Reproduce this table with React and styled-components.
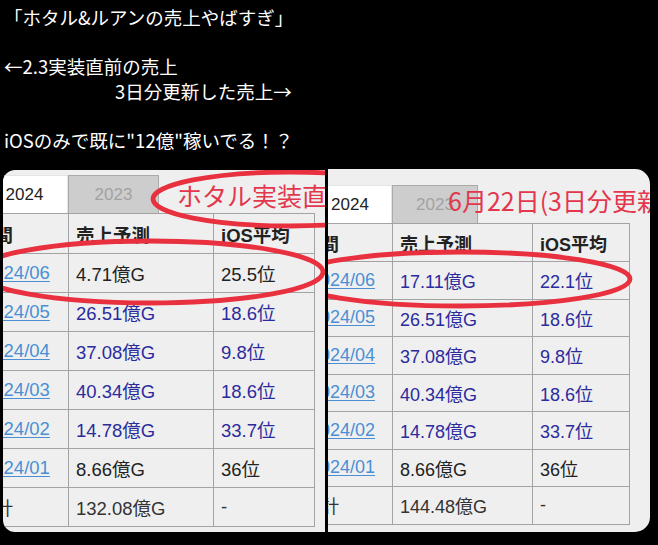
import styled, { createGlobalStyle } from "styled-components";

const GlobalStyles = createGlobalStyle`
  * { box-sizing: border-box; }
  body {
    margin: 0;
    background: #000;
  }
`;

const leftRows = [
  { date: "2024/06", sales: "4.71億G", rank: "25.5位", blue: false },
  { date: "2024/05", sales: "26.51億G", rank: "18.6位", blue: true },
  { date: "2024/04", sales: "37.08億G", rank: "9.8位", blue: true },
  { date: "2024/03", sales: "40.34億G", rank: "18.6位", blue: true },
  { date: "2024/02", sales: "14.78億G", rank: "33.7位", blue: true },
  { date: "2024/01", sales: "8.66億G", rank: "36位", blue: false },
];

const rightRows = [
  { date: "2024/06", sales: "17.11億G", rank: "22.1位", blue: true },
  ...leftRows.slice(1),
];

const shots = [
  {
    rows: leftRows,
    total: "132.08億G",
    cols: [93, 145, 101],
    head: 40,
    row: 39,
    font: 18.5,
    shift: -28,
    note: { text: "ホタル実装直前", x: 174, y: 13 },
    rings: [
      { cx: 287, cy: 29, rx: 137, ry: 27 },
      { cx: 147, cy: 102, rx: 173, ry: 31 },
    ],
  },
  {
    rows: rightRows,
    total: "144.48億G",
    cols: [90, 140, 97],
    head: 38,
    row: 37.5,
    font: 18,
    shift: -26,
    note: { text: "6月22日(3日分更新)", x: 120, y: 19 },
    rings: [{ cx: 132, cy: 110, rx: 170, ry: 27 }],
  },
];

export default function App() {
  return (
    <>
      <GlobalStyles />
      <Page>
        <Caption>
          <Line>「ホタル&ルアンの売上やばすぎ」</Line>
          <Line />
          <Line>←2.3実装直前の売上</Line>
          <Line $indent={111}>3日分更新した売上→</Line>
          <Line />
          <Line>iOSのみで既に"12億"稼いでる！？</Line>
        </Caption>
        <Shots>
          {shots.map((s, i) => (
            <Shot key={i} $side={i === 0 ? "left" : "right"}>
              <Sheet $shift={s.shift} $font={s.font}>
                <Tabs>
                  <Tab $w={s.cols[0]} $active>2024</Tab>
                  <Tab $w={s.cols[1] - 54}>2023</Tab>
                </Tabs>
                <Table $w={s.cols[0] + s.cols[1] + s.cols[2]}>
                  <colgroup>
                    {s.cols.map((w, k) => <col key={k} style={{ width: w }} />)}
                  </colgroup>
                  <tbody>
                    <tr style={{ height: s.head }}>
                      <Head $tight>期間</Head>
                      <Head>売上予測</Head>
                      <Head>iOS平均</Head>
                    </tr>
                    {s.rows.map((r) => (
                      <tr key={r.date} style={{ height: s.row }}>
                        <Cell><DateLink>{r.date}</DateLink></Cell>
                        <Cell $blue={r.blue}>{r.sales}</Cell>
                        <Cell $blue={r.blue}>{r.rank}</Cell>
                      </tr>
                    ))}
                    <tr style={{ height: s.row }}>
                      <Cell $tight $muted>合計</Cell>
                      <Cell $muted>{s.total}</Cell>
                      <Cell $muted>-</Cell>
                    </tr>
                  </tbody>
                </Table>
              </Sheet>
              <Note $x={s.note.x} $y={s.note.y}>{s.note.text}</Note>
              <Rings viewBox="0 0 322 363">
                {s.rings.map((e, k) => (
                  <ellipse key={k} {...e} fill="none" stroke="#e8303f" strokeWidth="4.8" />
                ))}
              </Rings>
            </Shot>
          ))}
        </Shots>
      </Page>
    </>
  );
}

const Page = styled.div`
  width: 658px;
  height: 545px;
  background: #000;
  overflow: hidden;
`;

const Caption = styled.div`
  height: 169px;
  padding: 5px 0 0 4px;
  color: #fff;
  font-family: "Noto Sans CJK JP", sans-serif;
  font-size: 18.5px;
  line-height: 24.7px;
`;

const Line = styled.div`
  height: 24.7px;
  padding-left: ${(p) => p.$indent || 0}px;
  white-space: pre;
`;

const Shots = styled.div`
  display: flex;
  align-items: flex-start;
  gap: 3px;
  padding-left: 3px;
`;

const Shot = styled.div`
  position: relative;
  overflow: hidden;
  width: 322px;
  background: #efefef;
  height: ${(p) => (p.$side === "left" ? 362 : 363)}px;
  margin-top: ${(p) => (p.$side === "left" ? 1 : 0)}px;
  padding-top: ${(p) => (p.$side === "left" ? 5 : 16)}px;
  border-radius: ${(p) => (p.$side === "left" ? "12px 0 0 12px" : "0 15px 15px 0")};
`;

const Sheet = styled.div`
  margin-left: ${(p) => p.$shift}px;
  font-family: "Liberation Sans", "Noto Sans CJK JP", sans-serif;
  font-size: ${(p) => p.$font}px;
  color: #222;
`;

const Tabs = styled.div`
  display: flex;
  height: 38px;
`;

const Tab = styled.div`
  width: ${(p) => p.$w}px;
  display: flex;
  align-items: center;
  justify-content: center;
  padding-left: ${(p) => (p.$active ? 6 : 0)}px;
  font-size: 17px;
  background: ${(p) => (p.$active ? "#fff" : "#cdcdcd")};
  border: 1px solid ${(p) => (p.$active ? "#e4e4e4" : "#aaa")};
  border-bottom: none;
  color: ${(p) => (p.$active ? "#222" : "#a2a2a2")};
`;

const Table = styled.table`
  width: ${(p) => p.$w}px;
  table-layout: fixed;
  border-collapse: collapse;
  border: 1px solid #999;
`;

const Cell = styled.td`
  border: 1px solid #a3a3a3;
  padding: 0 ${(p) => (p.$tight ? "0" : "7px")};
  padding-right: 4px;
  white-space: nowrap;
  overflow: hidden;
  color: ${(p) => (p.$blue ? "#2b2b9e" : p.$muted ? "#333" : "#222")};
`;

const Head = styled(Cell)`
  font-weight: 700;
  color: #222;
`;

const DateLink = styled.span`
  color: #4a8fd4;
  text-decoration: underline;
  text-underline-offset: 2px;
`;

const Note = styled.div`
  position: absolute;
  left: ${(p) => p.$x}px;
  top: ${(p) => p.$y}px;
  font-family: "Noto Sans CJK JP", sans-serif;
  font-size: 25px;
  line-height: 1;
  color: #e2374d;
  white-space: nowrap;
`;

const Rings = styled.svg`
  position: absolute;
  left: 0;
  top: 0;
  width: 322px;
  height: 363px;
  pointer-events: none;
`;
